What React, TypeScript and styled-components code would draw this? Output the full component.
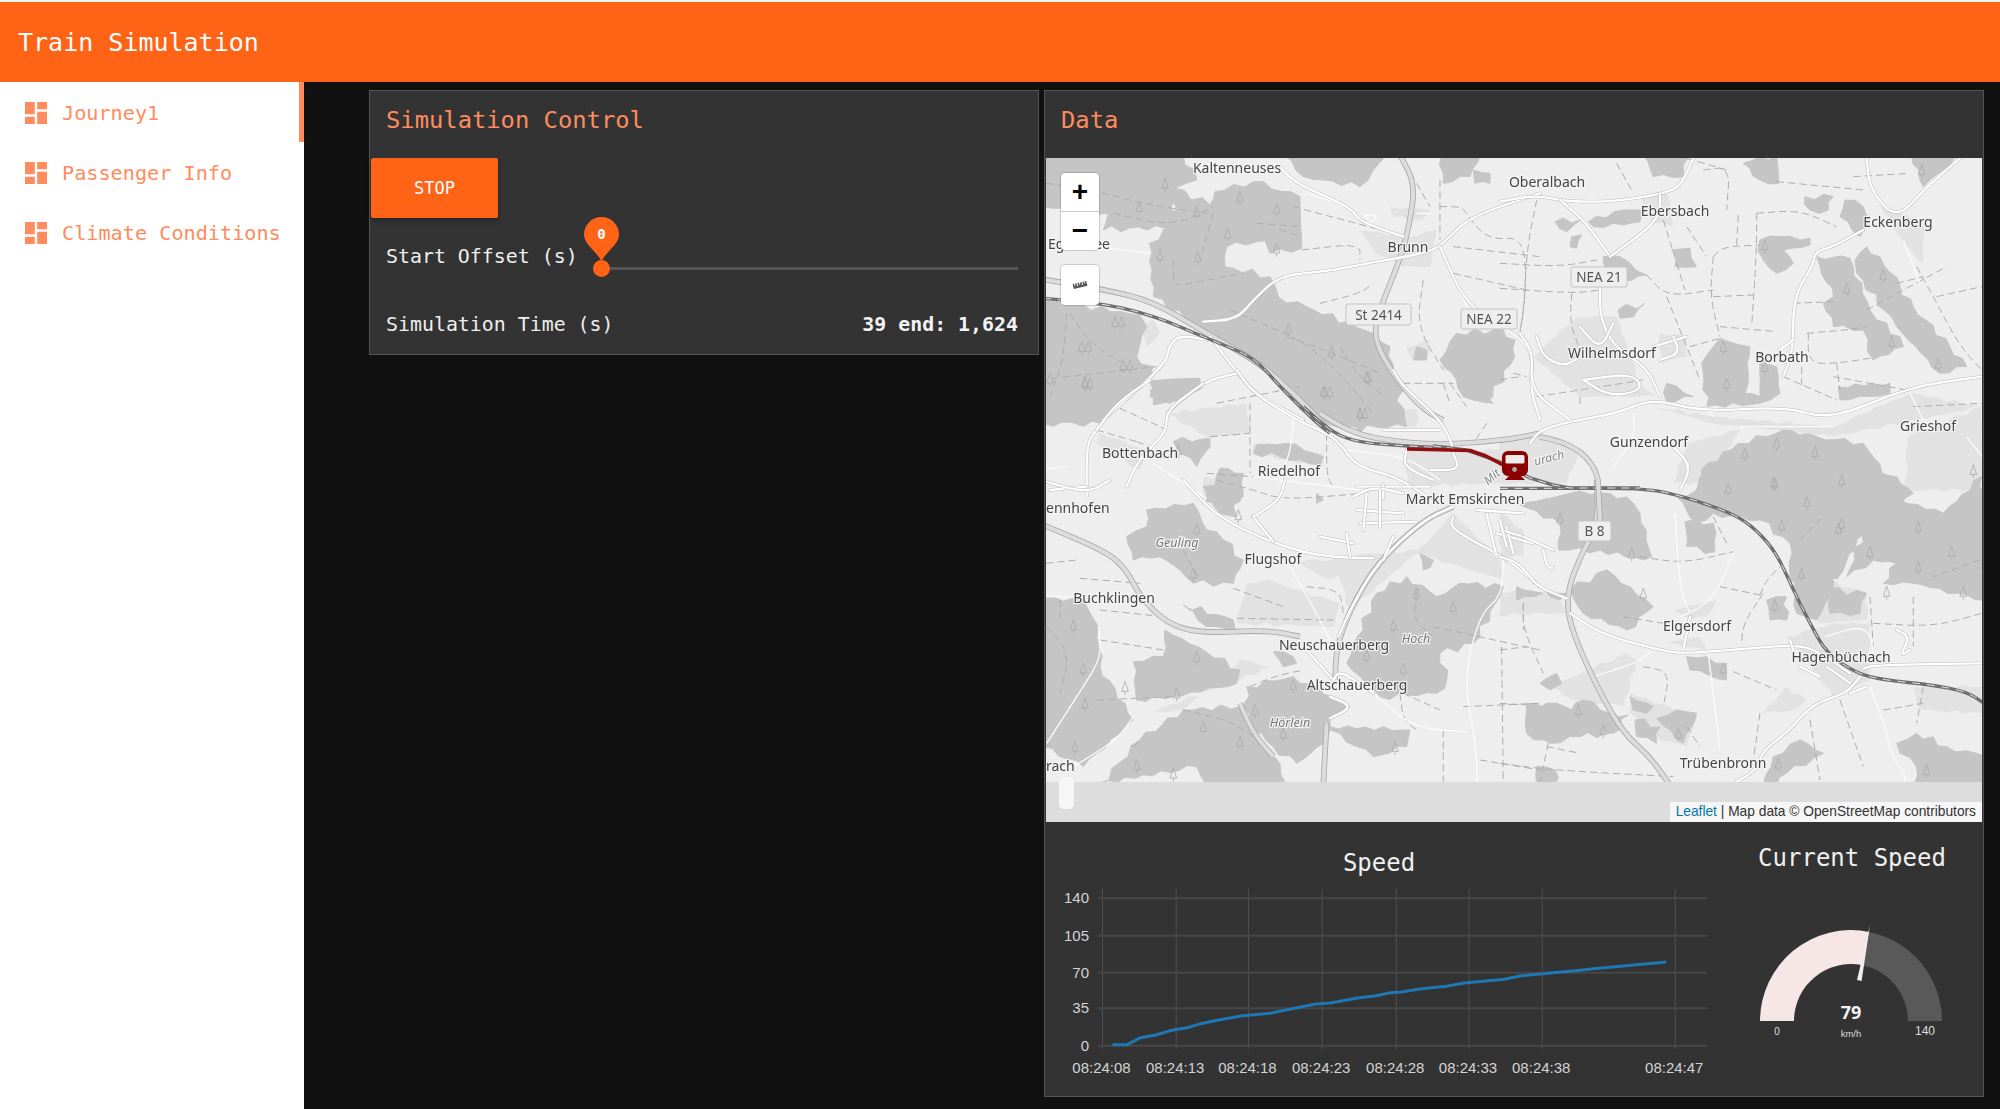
import React from "react";
import styled, { createGlobalStyle } from "styled-components";

const Global = createGlobalStyle`
  html, body { margin: 0; padding: 0; background: #f2f2f2; overflow: hidden; }
  #root { height: 1109px; }
`;
const MONO = `"DejaVu Sans Mono", "Liberation Mono", monospace`;
const ORANGE = "#ff6316";
const TINT = "#ff8c5e";

const Page = styled.div`
  height: 1107px; padding-top: 2px; display: flex; flex-direction: column;
  font-family: ${MONO};
`;
const Header = styled.header`
  height: 80px; flex: none; background: ${ORANGE}; color: #fff; display: flex; align-items: center;
  padding-left: 18px; font-size: 25px; box-sizing: border-box;
`;
const Body = styled.div`flex: 1; display: flex; min-height: 0;`;
const Sidebar = styled.nav`width: 304px; flex: none; background: #fff;`;
const NavItem = styled.div<{ $active?: boolean }>`
  height: 60px; box-sizing: border-box; display: flex; align-items: center; gap: 15px; padding: 2px 0 0 25px;
  color: ${TINT}; font-size: 20.2px; border-right: 5px solid ${(p) => (p.$active ? TINT : "transparent")};
`;
const NavIcon = styled.svg`width: 22px; height: 22px; fill: ${TINT}; flex: none;`;
const Main = styled.main`
  flex: 1; background: #111; display: grid; grid-template-columns: 671px 940px; gap: 4px;
  align-items: start; padding: 8px 0 0 65px;
`;
const Panel = styled.section`
  background: #333; border: 1px solid #555; box-sizing: border-box; color: #eee;
`;
const ControlPanel = styled(Panel)`height: 265px; width: 670px;`;
const DataPanel = styled(Panel)`height: 1007px;`;
const PanelTitle = styled.h2`
  margin: 0; height: 67px; display: flex; align-items: center; padding: 0 0 9px 16px; box-sizing: border-box;
  font-size: 23.8px; font-weight: 400; color: ${TINT};
`;
const StopButton = styled.button`
  display: block; margin-left: 1px; width: 127px; height: 60px; border: 0; border-radius: 2px; background: ${ORANGE};
  color: #fff; font: 400 17px ${MONO}; box-shadow: 0 3px 5px rgba(0,0,0,.25);
`;
const SliderRow = styled.div`
  height: 76px; box-sizing: border-box; padding: 21px 20px 0 16px; display: flex; align-items: flex-start; gap: 8px;
  font-size: 19.9px; line-height: 36px;
`;
const Slider = styled.div`flex: 1; height: 36px; position: relative;`;
const Track = styled.div`
  position: absolute; left: 15px; right: 0; top: 28px; height: 3px; background: #555;
`;
const Thumb = styled.div`
  position: absolute; left: 7px; top: 21px; width: 17px; height: 17px; border-radius: 50%; background: ${ORANGE};
`;
const Pin = styled.svg`position: absolute; left: -2px; top: -22px; width: 35px; height: 44px;`;
const TimeRow = styled.div`
  height: 60px; display: flex; align-items: center; justify-content: space-between; padding: 0 20px 0 16px;
  font-size: 19.9px;
`;
const TimeValue = styled.b`font-weight: 700; color: #f4f4f4;`;
const MapBox = styled.div`
  position: relative; margin: 0 1px; height: 664px; background: #ddd; overflow: hidden;
`;
const MapArt = styled.svg`display: block; width: 936px; height: 624px;`;
const ScrollBlob = styled.div`
  position: absolute; left: 13px; top: 619px; width: 15px; height: 32px; border-radius: 5px; background: #f6f6f6;
`;
const ZoomBar = styled.div`
  position: absolute; left: 15px; top: 15px; width: 38px; background: #fff; border-radius: 4px;
  box-shadow: 0 0 0 1px rgba(0,0,0,.15);
`;
const ZoomBtn = styled.div`
  height: 38px; display: flex; align-items: center; justify-content: center; color: #000;
  font: 700 28px "Liberation Sans", sans-serif; & + & { border-top: 1px solid #ccc; }
`;
const RulerBtn = styled.div`
  position: absolute; left: 15px; top: 107px; width: 38px; height: 40px; background: #fff; border-radius: 4px;
  box-shadow: 0 0 0 1px rgba(0,0,0,.15); display: flex; align-items: center; justify-content: center;
`;
const Attribution = styled.div`
  position: absolute; right: 0; bottom: 0; height: 20px; padding: 0 6px 0 6px; background: #f6f6f6;
  color: #333; font: 13.75px/20px "Liberation Sans", sans-serif; white-space: nowrap;
`;
const AttrLink = styled.span`color: #0078a8;`;
const Widgets = styled.div`display: grid; grid-template-columns: 668px 1fr;`;
const SpeedTitle = styled.h3<{ $top: number; $shift?: number }>`
  margin: 0; padding: ${(p) => p.$top}px 0 0 ${(p) => p.$shift ?? 0}px; font-size: 24px; line-height: 34px; font-weight: 400;
  text-align: center; color: #f0f0f0;
`;
const ChartSvg = styled.svg`display: block; width: 668px; height: 215px; font-family: "Liberation Sans", sans-serif;`;
const GaugeSvg = styled.svg`display: block; width: 270px; height: 220px; font-family: "Liberation Sans", sans-serif;`;

type Region = {
  o: [number, number];
  light?: string[]; forest?: string[]; dash?: string[]; thin?: string[]; grey?: string[]; road?: string[]; rail?: string[]; trees?: string[];
};

const regions: Region[] = [
  { o: [1040, 80],
    light: ["530,640 720,660 700,700 600,710", "1050,380 1170,390 1140,420 1060,410", "640,440 680,420 680,460", "300,740 340,720 360,760 320,800", "1100,800 1170,780 1160,840 1110,830", "960,450 1100,470 1190,450 1170,560 1090,560 1000,510"],
    forest: [
      "10,225 430,225 470,300 405,325 400,440 190,450 205,400 10,380",
      "405,325 510,375 525,335 640,305 780,350 782,440 785,505 690,520 675,482 560,500 555,560 690,590 715,650 800,680 1000,760 1050,800 1060,880 1100,1040 840,1040 700,880 510,760 340,650 328,490 400,440",
      "10,660 300,705 320,740 290,830 340,880 180,1030 10,1030",
      "330,930 470,895 485,925 420,960 340,975",
      "730,225 1040,225 960,320 850,300 790,290",
      "1205,225 1320,225 1290,290 1210,310",
      "1250,760 1390,750 1425,830 1340,970 1250,900 1200,840",
      "1130,800 1160,810 1160,840 1120,840",
      "1300,270 1350,280 1350,310 1305,310",
    ],
    dash: [
      "18,310 160,330 300,370 500,400", "220,400 400,440 520,380", "650,430 780,440", "720,450 785,470", "400,540 400,620 450,610 610,580",
      "520,400 480,540", "760,380 1100,470", "785,510 960,490 960,540", "840,670 960,640 1000,610", "1130,310 1170,380", "1200,300 1200,480",
      "1200,380 1270,380 1290,420 1350,480 1450,470 1460,620 1440,760", "1240,500 1500,530", "1240,580 1460,630",
      "90,700 150,790 250,850", "80,700 70,840 30,950", "0,900 350,860", "570,690 830,800 1000,1000", "740,770 830,800 1020,880", "900,800 950,880 1030,950",
      "1150,600 1130,740 1210,870", "1230,910 1280,980", "1420,880 1460,890", "1090,910 1240,910",
    ],
    thin: ["1200,500 1280,680", "18,480 330,520", "800,340 930,380", "1130,400 1170,400", "970,405 1015,405 995,430 970,405"],
    grey: ["1080,225 1125,310 1110,430 1080,540 1030,660 995,770 1070,900 1150,990 1210,1020", "10,598 200,630 340,665 500,760 660,850 760,940 850,1030"],
    road: [
      "490,725 590,718 640,660 720,585 860,575 980,550 1070,535 1170,515 1210,490 1290,410 1500,340",
      "720,262 770,312 930,380 960,425 1090,470", "1200,500 1280,680 1440,770 1480,830 1470,920 1500,1020",
      "510,770 600,890 660,950 790,1020", "190,1020 380,850 385,800 420,765 500,780", "380,1000 490,905 590,880",
    ],
    rail: ["10,655 200,672 350,710 500,775 640,830 720,920 820,1020 870,1060"],
    trees: ["375,310", "600,350", "710,385", "563,460", "298,380", "360,525", "473,530", "225,725", "245,725", "125,800", "145,800", "250,855", "270,855", "135,905", "745,745", "875,815", "980,890", "850,935", "960,1000", "710,505", "470,395", "30,895"],
  },
  { o: [1500, 150],
    light: ["230,500 350,500 420,700 470,740 240,740 100,620", "420,140 500,130 520,230 460,220", "1140,160 1270,220 1270,340 1210,280", "480,550 560,560 560,620 480,640", "460,770 640,800 1000,830 1230,730 1446,770 1000,860 640,820", "0,870 130,850 240,900 200,1000 0,1000", "560,880 720,840 620,1000 520,1000", "1220,860 1446,770 1446,1020 1220,1020"],
    forest: [
      "430,15 570,15 550,80 460,80", "730,40 830,15 835,100 780,90", "1235,15 1390,15 1270,110",
      "265,215 370,180 430,180 420,215 370,225 280,230", "165,215 240,210 200,245", "515,300 570,295 590,350 525,350",
      "780,270 840,260 930,265 930,285 850,300 880,340 830,370 790,330",
      "950,320 1050,325 1060,350 1110,480 1130,510 1200,560 1210,590 1120,630 1090,540 1000,530 970,460 1000,440 960,350",
      "1065,330 1100,290 1140,320 1200,410 1240,470 1350,590 1400,650 1320,670 1190,530 1070,370",
      "1035,150 1090,170 1110,210 1080,260 1020,200", "915,140 1000,140 985,180 930,180",
      "605,640 640,590 660,565 750,590 745,670 735,730 780,740 780,640 830,650 840,730 780,760 620,770",
      "500,700 580,740 500,755", "1015,710 1170,700 1170,730 1020,750", "355,480 435,460 400,500 360,505",
      "715,880 800,860 850,840 950,860 1090,880 1200,1030 600,1030 605,960", "-10,545 45,570 30,640 -10,640", "215,260 245,255 230,295 210,290",
      "310,320 360,320 440,375 340,400 310,340",
    ],
    dash: [
      "110,150 80,300 70,500 60,540", "0,340 180,350 290,330", "0,415 220,430 300,420", "215,430 210,520 240,600", "440,375 500,440 640,420", "500,440 540,540 600,690",
      "640,320 630,440 660,560", "640,320 670,290 780,285", "770,190 770,300 755,530", "490,210 555,420", "560,230 620,320", "640,440 760,435", "660,530 830,545",
      "350,40 400,130", "610,60 690,50 680,180", "715,195 710,285", "770,190 900,180 1010,230", "560,25 680,60", "830,95 1090,120",
      "880,460 1000,455", "920,550 1040,540 1100,530", "925,550 925,640 1010,640 1110,625", "905,650 905,720", "1010,640 1020,720",
      "850,680 1010,750", "1100,480 1340,350", "1250,350 1300,440 1380,590 1446,660", "1310,440 1446,410", "1060,80 1230,70",
      "1190,400 1270,380", "1220,720 1000,680", "570,590 660,565", "0,690 60,680", "110,740 240,720 430,690", "1240,770 1446,760", "240,740 240,770",
    ],
    thin: ["400,790 405,860 340,950", "1210,270 1260,400", "1230,730 1270,810", "720,830 1000,830", "1400,860 1446,920", "640,800 620,770"],
    grey: [],
    road: [
      "0,155 110,135 200,155 350,155 520,125 550,90 580,25", "180,150 260,220 330,320", "330,320 440,240 480,190 480,130",
      "300,410 300,500 340,590 440,650 480,740", "90,880 120,840 210,815 350,790 460,745 600,785 860,770 990,810 1230,710 1446,680",
      "60,550 100,610 90,720 210,810", "1100,25 1110,120 1190,210 1280,110 1380,25", "1090,240 1000,290 945,305 940,345 880,440 880,600 850,680",
      "520,890 575,950 540,1020",
      "110,560 130,620 190,650 240,620", "240,530 300,600 340,520", "250,690 400,670 430,720 330,740 250,690", "460,590 560,560", "520,560 540,610 480,630", "840,600 880,570",
    ],
    trees: ["1040,415", "1175,575", "670,590", "680,700", "795,650", "1150,375", "1265,60", "735,910", "830,880", "945,905", "1025,990", "820,995", "1420,960", "1315,640", "795,285"],
  },
  { o: [1040, 370],
    light: ["640,220 850,250 850,290 640,250", "380,130 620,100 630,190 500,200", "490,320 540,330 520,385 490,385", "1030,120 1130,120 1130,170 1040,170", "180,190 320,240 300,300 170,220", "1100,240 1400,240 1380,340 1100,350"],
    forest: [
      "400,215 510,205 510,230 470,290 420,250", "500,395 540,295 610,310 600,395", "325,30 480,25 480,50 390,100 330,80",
      "10,90 10,-10 340,-10 330,10 210,80 130,170 40,110", "1230,-5 1340,80 1360,100 1270,80", "650,225 740,220 850,260 840,285 720,260 640,250",
      "720,-10 1060,-10 1090,60 960,190 880,130",
    ],
    dash: ["240,115 340,160 380,180", "630,100 630,310", "170,180 290,215", "290,215 330,230", "510,200 630,190", "860,190 860,320 880,350", "530,100 780,50", "1210,40 1230,100", "500,310 640,320", "1340,160 1300,220"],
    thin: ["760,140 750,260 720,300 730,385", "920,240 1100,260 1200,330", "0,300 80,290", "340,280 500,385", "640,320 960,360"],
    grey: ["840,130 920,180 1020,210 1200,225 1400,210 1500,190"],
    road: [
      "590,0 640,70 770,150 860,190 900,220 950,290 1070,320 1170,385", "490,40 380,120 380,180 340,225 290,280 260,350", "170,180 140,220 140,380", "330,30 230,100 170,180",
      "30,360 140,350", "1060,0 1090,50 1180,130 1220,180 1240,240", "1030,180 1200,180", "1100,240 1090,290 1180,330", "1170,300 1260,300 1240,250", "950,350 1170,350", "1030,345 1030,385",
    ],
    rail: ["790,110 880,190 960,218 1100,228 1180,232"],
    trees: ["135,40", "150,40", "855,65", "870,65", "960,130", "975,130", "985,20", "415,240"],
  },
  { o: [1040, 480],
    light: ["620,310 680,300 900,370 880,440 590,430", "1240,100 1380,240 1390,300 1130,220", "800,240 1000,240 870,300 770,250", "320,700 600,600 690,560 600,540 430,690", "880,230 1140,210 930,390", "1340,410 1500,370 1500,400"],
    forest: [
      "320,90 460,70 500,150 550,180 610,240 580,310 460,310 420,270 360,230 280,240 260,170 320,140",
      "490,20 590,5 610,50 580,80 590,110 540,100", "10,355 130,360 175,440 180,560 280,720 130,860 10,800",
      "375,450 600,570 590,610 400,650 290,660 280,545 370,530",
      "940,500 1010,340 1100,290 1190,350 1260,310 1390,320 1380,350 1300,490 1200,520 1220,600 1190,640 1020,650 920,550",
      "620,620 760,590 880,650 930,680 870,710 870,740 1110,750 1100,800 1000,830 870,750 850,790 770,850 700,800 620,730",
      "180,915 300,780 430,690 600,680 640,760 720,850 740,915 500,915 470,860 150,915",
      "430,375 580,420 585,445 500,440", "700,515 760,530 770,550 730,560", "1140,220 1180,240 1150,270",
      "1460,670 1510,680 1510,780 1460,760", "1430,320 1510,340 1480,350 1430,360", "830,40 850,60 830,70",
    ],
    dash: [
      "530,0 640,30 730,60 970,40", "18,250 110,240", "120,295 300,310", "180,390 370,410", "180,480 370,510", "430,210 480,300", "580,325 730,380", "590,415 880,420",
      "800,320 900,330 910,400", "1180,440 1500,510", "1270,680 1500,670", "1210,750 1210,905", "1385,500 1390,905", "1320,840 1500,870", "1450,370 1450,450",
      "60,360 60,430", "20,440 90,520 60,640", "170,660 400,650", "630,620 700,590 790,570", "1130,340 1120,420 1180,470", "430,690 600,730 720,850", "1080,640 1090,720 1130,750",
      "1090,640 1200,690", "280,800 300,780",
    ],
    thin: ["750,260 830,400 880,500", "175,440 185,530 130,620 20,790", "100,860 230,780 280,710", "1000,640 1120,745 1280,755", "1390,240 1385,350 1320,400 1270,600 1310,800 1310,905", "18,350 100,350"],
    grey: ["10,135 200,215 260,270 300,350 380,430 480,460 680,450 780,470", "850,915 860,730", "600,670 640,760 700,830", "1240,80 1150,120 1010,250 930,390 890,500 885,600"],
    road: [
      "430,0 530,110 700,190 840,230 1000,235", "1240,80 1150,120 1010,250 930,390 895,470", "800,510 880,600", "870,650 940,680 870,715",
      "1000,640 900,570 880,600", "1240,110 1230,140 1310,190 1400,235 1500,320", "640,110 700,185", "640,110 720,60 735,0",
      "940,50 1000,20 1090,40", "950,90 1090,100", "960,130 1130,125", "980,40 970,150", "1020,30 1020,140", "840,170 940,190", "920,160 930,230", "1060,170 1030,240", "1370,160 1480,190", "1340,100 1370,230", "1400,140 1420,220", "1310,90 1450,100",
      "0,0 140,40 210,0",
    ],
    trees: ["470,145", "595,105", "460,280", "100,435", "130,565", "105,800", "135,670", "255,620", "470,530", "410,640", "645,690", "490,740", "730,760", "1130,340", "1240,380", "1060,435", "1090,565", "980,525", "290,855", "400,880", "760,615", "600,785", "1065,800"],
  },
  { o: [1500, 480],
    light: ["520,390 650,360 620,410 570,420", "0,340 70,330 170,340 200,400 0,400", "70,150 0,100 0,230 70,230", "600,470 620,510 500,490", "150,620 380,520 410,540 370,680 220,660", "860,470 1000,430 1110,430 1110,600 1000,650", "1240,620 1446,620 1446,700 1260,690", "980,300 1100,340 1100,420 950,430", "390,640 590,710 560,800 480,780 390,700", "790,700 860,620 920,660 880,690"],
    forest: [
      "60,75 210,40 330,40 400,70 420,100 455,230 430,240 300,210 175,210 180,130",
      "530,50 590,30 600,-10 1190,-10 1240,40 1150,110 1070,180 1030,270 960,320 870,300 870,190 780,120 640,100 590,130",
      "890,300 1000,300 1000,330 950,420 890,400 880,320",
      "1100,130 1200,60 1330,100 1446,-10 1456,360 1370,340 1240,310 1150,310 1190,250 1120,240 1040,290",
      "210,330 320,270 460,380 380,450 250,400",
      "85,680 170,670 215,690 250,660 330,700 385,705 340,760 240,770 150,790 80,750", "120,610 170,580 185,610 150,630",
      "405,720 480,740 470,790 410,770", "470,715 530,690 590,700 550,790", "800,360 860,350 860,420 810,420",
      "985,330 1100,340 1080,400 990,400", "560,530 620,530 680,550 680,600 570,570",
      "1190,790 1250,760 1340,800 1456,830 1456,915 1240,915 1250,860 1200,820", "820,830 900,780 970,820 860,880 830,915 790,915",
      "390,650 460,680 440,700 400,690", "555,125 640,130 645,215 560,200", "140,335 200,340 180,360 150,350", "110,860 165,870 165,915 110,915",
    ],
    dash: [
      "420,230 550,250 700,215", "640,110 680,190", "660,320 780,345", "780,345 800,300 840,260", "790,340 730,430 725,490", "370,410 490,430", "70,370 70,450 130,580", "0,510 80,500",
      "430,560 510,575 490,680", "700,575 830,630", "1120,430 1300,440 1446,400", "1240,350 1240,500", "1020,660 1090,860", "1110,350 1120,500", "0,670 80,675", "0,850 150,870 520,890",
      "145,790 120,905", "140,800 240,820", "560,740 600,800", "930,720 960,900", "780,700 760,840", "1150,690 1270,670", "1270,620 1250,730", "900,180 970,110", "1440,240 1300,290",
    ],
    thin: ["525,100 540,330 570,400", "625,520 660,810", "280,590 420,545 450,515", "1110,620 1160,750 1170,820 1215,880 1215,905", "700,220 660,320 610,380 540,410", "975,470 1110,430 1125,570"],
    grey: ["290,0 295,130 240,230 200,340 210,440 290,620 370,760 450,830 510,915"],
    road: [
      "0,230 60,250 110,320 200,355", "210,400 310,465 500,515 560,520 750,505 880,495 950,510 1050,580", "1090,565 1130,555 1446,550",
      "1080,590 1040,640 940,670 860,760 790,810 770,870 710,905", "570,410 550,510", "5,150 70,170", "70,170 160,210", "130,210 140,260 160,265", "900,560 960,590", "980,560 1050,610", "1050,640 1100,620", "1190,450 1230,470 1200,530 1230,510",
      "0,120 20,200", "870,480 880,510",
    ],
    rail: ["0,25 200,25 420,25 520,40 700,100 770,150 830,220 880,330 930,430 980,520 1070,580 1150,600 1300,615 1400,635 1456,672"],
    trees: ["180,115", "685,25", "825,10", "920,65", "1015,145", "1110,215", "905,280", "1255,140", "1355,215", "1255,260", "1390,335", "395,220", "430,340", "825,375", "670,565", "235,690", "310,750", "1025,130", "1280,870", "835,850", "535,760", "845,135", "1160,335"],
  },
];

const labels: [string, number, number, boolean?][] = [
  ["Kaltenneuses", 1237, 168], ["Oberalbach", 1547, 182], ["Ebersbach", 1675, 211], ["Eckenberg", 1898, 222], ["Brunn", 1408, 247],
  ["Wilhelmsdorf", 1612, 353], ["Borbath", 1782, 357], ["Grieshof", 1928, 426], ["Gunzendorf", 1649, 442],
  ["Bottenbach", 1140, 453], ["Riedelhof", 1289, 471], ["Markt Emskirchen", 1465, 499], ["Flugshof", 1273, 559], ["Buchklingen", 1114, 598],
  ["Neuschauerberg", 1334, 645], ["Altschauerberg", 1357, 685], ["Elgersdorf", 1697, 626], ["Hagenbüchach", 1841, 657], ["Trübenbronn", 1723, 763],
  ["Geuling", 1177, 542, true], ["Hoch", 1416, 638, true], ["Hörlein", 1290, 722, true],
];
const shields: [string, number, number, number, number][] = [
  ["St 2414", 1346, 304, 65, 21], ["NEA 22", 1461, 309, 56, 20], ["NEA 21", 1571, 267, 56, 20], ["B 8", 1578, 521, 33, 20],
];

const parse = (s: string) => s.split(" ").map((p) => p.split(",").map(Number));
const mid = (a: number[], b: number[]) => `${(a[0] + b[0]) / 2},${(a[1] + b[1]) / 2}`;
/* Field and forest edges: subdivide each side and nudge it, so they read as irregular land-use borders. */
const organic = (s: string, amp: number) => {
  const p = parse(s);
  const out: string[] = [];
  p.forEach((a, i) => {
    const b = p[(i + 1) % p.length];
    const dx = b[0] - a[0], dy = b[1] - a[1];
    const len = Math.hypot(dx, dy) || 1;
    const steps = Math.max(1, Math.round(len / 28));
    for (let k = 0; k < steps; k++) {
      const t = k / steps;
      const n = k === 0 ? 0 : amp * (Math.sin(a[0] * 0.13 + k * 2.7) + 0.6 * Math.sin(a[1] * 0.21 + k * 4.1));
      out.push(`${(a[0] + dx * t - (dy / len) * n).toFixed(1)},${(a[1] + dy * t + (dx / len) * n).toFixed(1)}`);
    }
  });
  return `M${out.join("L")}Z`;
};
const openCurve = (s: string) => {
  const p = parse(s);
  if (p.length < 3) return `M${p[0]} L${p[p.length - 1]}`;
  let d = `M${p[0]} L${mid(p[0], p[1])}`;
  for (let i = 1; i < p.length - 1; i++) d += ` Q${p[i][0]},${p[i][1]} ${mid(p[i], p[i + 1])}`;
  return d + ` L${p[p.length - 1]}`;
};

const Tree = ({ p }: { p: string }) => {
  const [x, y] = p.split(",").map(Number);
  return <path d={`M${x - 10},${y + 14} L${x},${y - 16} L${x + 10},${y + 14} Z M${x},${y + 14} V${y + 24}`} fill="none" stroke="#a9a9a9" strokeWidth="2.4" />;
};

const layer = (key: keyof Region, render: (s: string, i: number) => React.ReactNode) =>
  regions.map((r, ri) => (
    <g key={`${String(key)}${ri}`} transform={`translate(${r.o[0]},${r.o[1]}) scale(0.3333)`}>
      {((r[key] as string[]) || []).map(render)}
    </g>
  ));

const MapDrawing = () => (
  <MapArt viewBox="1046 158 936 624">
    <defs>
      <filter id="soft" x="0" y="0" width="1" height="1"><feGaussianBlur stdDeviation="0.5" /></filter>
    </defs>
    <g filter="url(#soft)">
      <rect x="1046" y="158" width="936" height="624" fill="#eeeeee" />
      {layer("light", (s, i) => <path key={i} d={organic(s, 4)} fill="#e2e2e2" />)}
      {layer("forest", (s, i) => <path key={i} d={organic(s, 7)} fill="#c5c5c5" stroke="#c5c5c5" strokeWidth="3" strokeLinejoin="round" />)}
      {layer("dash", (s, i) => <path key={i} d={openCurve(s)} fill="none" stroke="#adadad" strokeWidth="3" strokeDasharray="22 12" />)}
      {layer("trees", (s, i) => <Tree key={i} p={s} />)}
      {layer("thin", (s, i) => <path key={i} d={openCurve(s)} fill="none" stroke="#fbfbfb" strokeWidth="4" />)}
      {layer("grey", (s, i) => (
        <g key={i}>
          <path d={openCurve(s)} fill="none" stroke="#a8a8a8" strokeWidth="17" />
          <path d={openCurve(s)} fill="none" stroke="#dcdcdc" strokeWidth="12" />
        </g>
      ))}
      {layer("road", (s, i) => (
        <g key={i}>
          <path d={openCurve(s)} fill="none" stroke="#bdbdbd" strokeWidth="10" strokeLinecap="round" />
          <path d={openCurve(s)} fill="none" stroke="#ffffff" strokeWidth="7" strokeLinecap="round" />
        </g>
      ))}
      {layer("rail", (s, i) => (
        <g key={i}>
          <path d={openCurve(s)} fill="none" stroke="#6e6e6e" strokeWidth="10" />
          <path d={openCurve(s)} fill="none" stroke="#e6e6e6" strokeWidth="3" strokeDasharray="24 20" />
        </g>
      ))}
      <polyline points="1433,446 1466,450 1500,462 1530,478 1553,485 1570,488 1640,488" fill="none" stroke="#6e6e6e" strokeWidth="3.4" />
      <polyline points="1433,446 1466,450 1500,462 1530,478 1553,485 1570,488 1640,488" fill="none" stroke="#e6e6e6" strokeWidth="1" strokeDasharray="8 6" />
      <path d="M1540,437 Q1590,445 1598,480 L1600,521" fill="none" stroke="#a8a8a8" strokeWidth="5.6" />
      <path d="M1540,437 Q1590,445 1598,480 L1600,521" fill="none" stroke="#dcdcdc" strokeWidth="4" />
      {shields.map(([t, x, y, w, h]) => (
        <g key={t}>
          <rect x={x} y={y} width={w} height={h} rx="2" fill="#eeeeee" stroke="#c4c4c4" />
          <text x={x + w / 2} y={y + h / 2 + 5} textAnchor="middle" fontFamily="Noto Sans, sans-serif" fontSize="13.5" fill="#555">{t}</text>
        </g>
      ))}
      <g fontFamily="Noto Sans, sans-serif" fontSize="14" fill="#444" stroke="#f4f4f4" strokeWidth="2.4" strokeLinejoin="round" textAnchor="middle" style={{ paintOrder: "stroke" }}>
        {labels.map(([t, x, y, it]) => (
          <text key={t} x={x} y={y + 5} fontStyle={it ? "italic" : "normal"} fontSize={it ? 12.5 : 14} fill={it ? "#777" : "#444"}>{t}</text>
        ))}
        <text x="1048" y="249" textAnchor="start">Eg</text>
        <text x="1110" y="249" textAnchor="end">ee</text>
        <text x="1046" y="513" textAnchor="start">ennhofen</text>
        <text x="1046" y="771" textAnchor="start">rach</text>
        <text x="1492" y="481" fontSize="12" fontStyle="italic" fill="#888" transform="rotate(-40 1492 477)">Mit</text>
        <text x="1549" y="462" fontSize="12" fontStyle="italic" fill="#888" transform="rotate(-15 1549 458)">urach</text>
      </g>
    </g>
    <polyline points="1407,449 1470,450.5 1486,456 1503,465" fill="none" stroke="#930f0f" strokeWidth="3.6" strokeLinejoin="round" />
    <g fill="#8b0000">
      <rect x="1502" y="451" width="26" height="25" rx="6" />
      <path d="M1505,480 L1509,476 H1521 L1525,480 Z" />
      <rect x="1505.5" y="455" width="19" height="8.5" rx="1.5" fill="#ececec" />
      <circle cx="1514.5" cy="469.5" r="2.4" fill="#aaa" />
    </g>
  </MapArt>
);

const px = (x: number) => x / 2.24 + 1040;
const py = (y: number) => y / 3 + 820;
const vGrid = [140, 305, 467, 632, 798, 961, 1125, 1423];
const hGrid: [number, string][] = [[238, "140"], [350, "105"], [461, "70"], [568, "35"], [680, "0"]];
const xLabels = ["08:24:08", "08:24:13", "08:24:18", "08:24:23", "08:24:28", "08:24:33", "08:24:38", "08:24:47"];
const line = [[162,677],[195,677],[225,656],[260,648],[295,634],[330,626],[360,614],[400,603],[450,591],[515,583],[570,568],[615,556],[650,552],[715,536],[750,531],[785,521],[810,519],[850,510],[910,502],[950,492],[1040,481],[1075,471],[1125,464],[1210,454],[1240,449],[1403,429]];

const SpeedChart = () => (
  <ChartSvg viewBox="1045 881 668 215">
    {vGrid.map((x) => <line key={x} x1={px(x)} x2={px(x)} y1="890" y2="1050" stroke="#505050" strokeWidth="1" />)}
    {hGrid.map(([y, t]) => (
      <g key={t}>
        <line x1={px(130)} x2={px(1494)} y1={py(y)} y2={py(y)} stroke="#474747" strokeWidth="2" />
        <text x="1089" y={py(y) + 5} textAnchor="end" fontSize="15" fill="#d4d4d4">{t}</text>
      </g>
    ))}
    {xLabels.map((t, i) => <text key={t} x={px(vGrid[i]) - 1} y="1073.5" textAnchor="middle" fontSize="15" fill="#d4d4d4">{t}</text>)}
    <polyline points={line.map(([x, y]) => `${px(x)},${py(y)}`).join(" ")} fill="none" stroke="#1f77b4" strokeWidth="3" />
  </ChartSvg>
);

const SpeedGauge = () => (
  <GaugeSvg viewBox="1713 875 270 220">
    <path d="M1760,1021 A91,91 0 0 1 1869.2,931.9 L1862.4,965.2 A57,57 0 0 0 1794,1021 Z" fill="#f6e6e6" />
    <path d="M1869.2,931.9 A91,91 0 0 1 1942,1021 L1908,1021 A57,57 0 0 0 1862.4,965.2 Z" fill="#595959" />
    <polygon points="1857,980 1861.6,981 1870,925" fill="#eeeeee" />
    <text x="1851" y="1019" textAnchor="middle" fontFamily="Noto Sans, sans-serif" fontWeight="700" fontSize="18" fill="#f2f2f2">79</text>
    <text x="1851" y="1037" textAnchor="middle" fontSize="9.5" fill="#ddd">km/h</text>
    <text x="1777" y="1035" textAnchor="middle" fontSize="10" fill="#ddd">0</text>
    <text x="1925" y="1034.5" textAnchor="middle" fontSize="12" fill="#ddd">140</text>
  </GaugeSvg>
);

const DashboardIcon = () => (
  <NavIcon viewBox="3 3 18 18"><path d="M3 13h8V3H3v10zm0 8h8v-6H3v6zm10 0h8V11h-8v10zm0-18v6h8V3h-8z" /></NavIcon>
);

export default function App() {
  return (
    <Page>
      <Global />
      <Header>Train Simulation</Header>
      <Body>
        <Sidebar>
          <NavItem $active><DashboardIcon />Journey1</NavItem>
          <NavItem><DashboardIcon />Passenger Info</NavItem>
          <NavItem><DashboardIcon />Climate Conditions</NavItem>
        </Sidebar>
        <Main>
          <ControlPanel>
            <PanelTitle>Simulation Control</PanelTitle>
            <StopButton>STOP</StopButton>
            <SliderRow>
              Start Offset (s)
              <Slider>
                <Track />
                <Thumb />
                <Pin viewBox="0 0 35 44">
                  <path d="M17.5 44 C 11 33 0 27 0 17.5 A17.5 17.5 0 0 1 35 17.5 C35 27 24 33 17.5 44Z" fill={ORANGE} />
                  <text x="17.5" y="22" textAnchor="middle" fontSize="14" fontWeight="700" fill="#fff" fontFamily={MONO}>0</text>
                </Pin>
              </Slider>
            </SliderRow>
            <TimeRow>
              <span>Simulation Time (s)</span>
              <TimeValue>39 end: 1,624</TimeValue>
            </TimeRow>
          </ControlPanel>
          <DataPanel>
            <PanelTitle>Data</PanelTitle>
            <MapBox>
              <MapDrawing />
              <ScrollBlob />
              <ZoomBar>
                <ZoomBtn>+</ZoomBtn>
                <ZoomBtn>−</ZoomBtn>
              </ZoomBar>
              <RulerBtn>
                <svg width="16" height="10" viewBox="0 0 16 10">
                  <g transform="rotate(-14 8 5)">
                    <rect x="1" y="2.5" width="14" height="5" fill="#555" />
                    <path d="M3 2.5v2M5.5 2.5v3M8 2.5v2M10.5 2.5v3M13 2.5v2" stroke="#fff" strokeWidth="1" />
                  </g>
                </svg>
              </RulerBtn>
              <Attribution><AttrLink>Leaflet</AttrLink> | Map data © OpenStreetMap contributors</Attribution>
            </MapBox>
            <Widgets>
              <div>
                <SpeedTitle $top={24}>Speed</SpeedTitle>
                <SpeedChart />
              </div>
              <div>
                <SpeedTitle $top={19} $shift={8}>Current Speed</SpeedTitle>
                <SpeedGauge />
              </div>
            </Widgets>
          </DataPanel>
        </Main>
      </Body>
    </Page>
  );
}
